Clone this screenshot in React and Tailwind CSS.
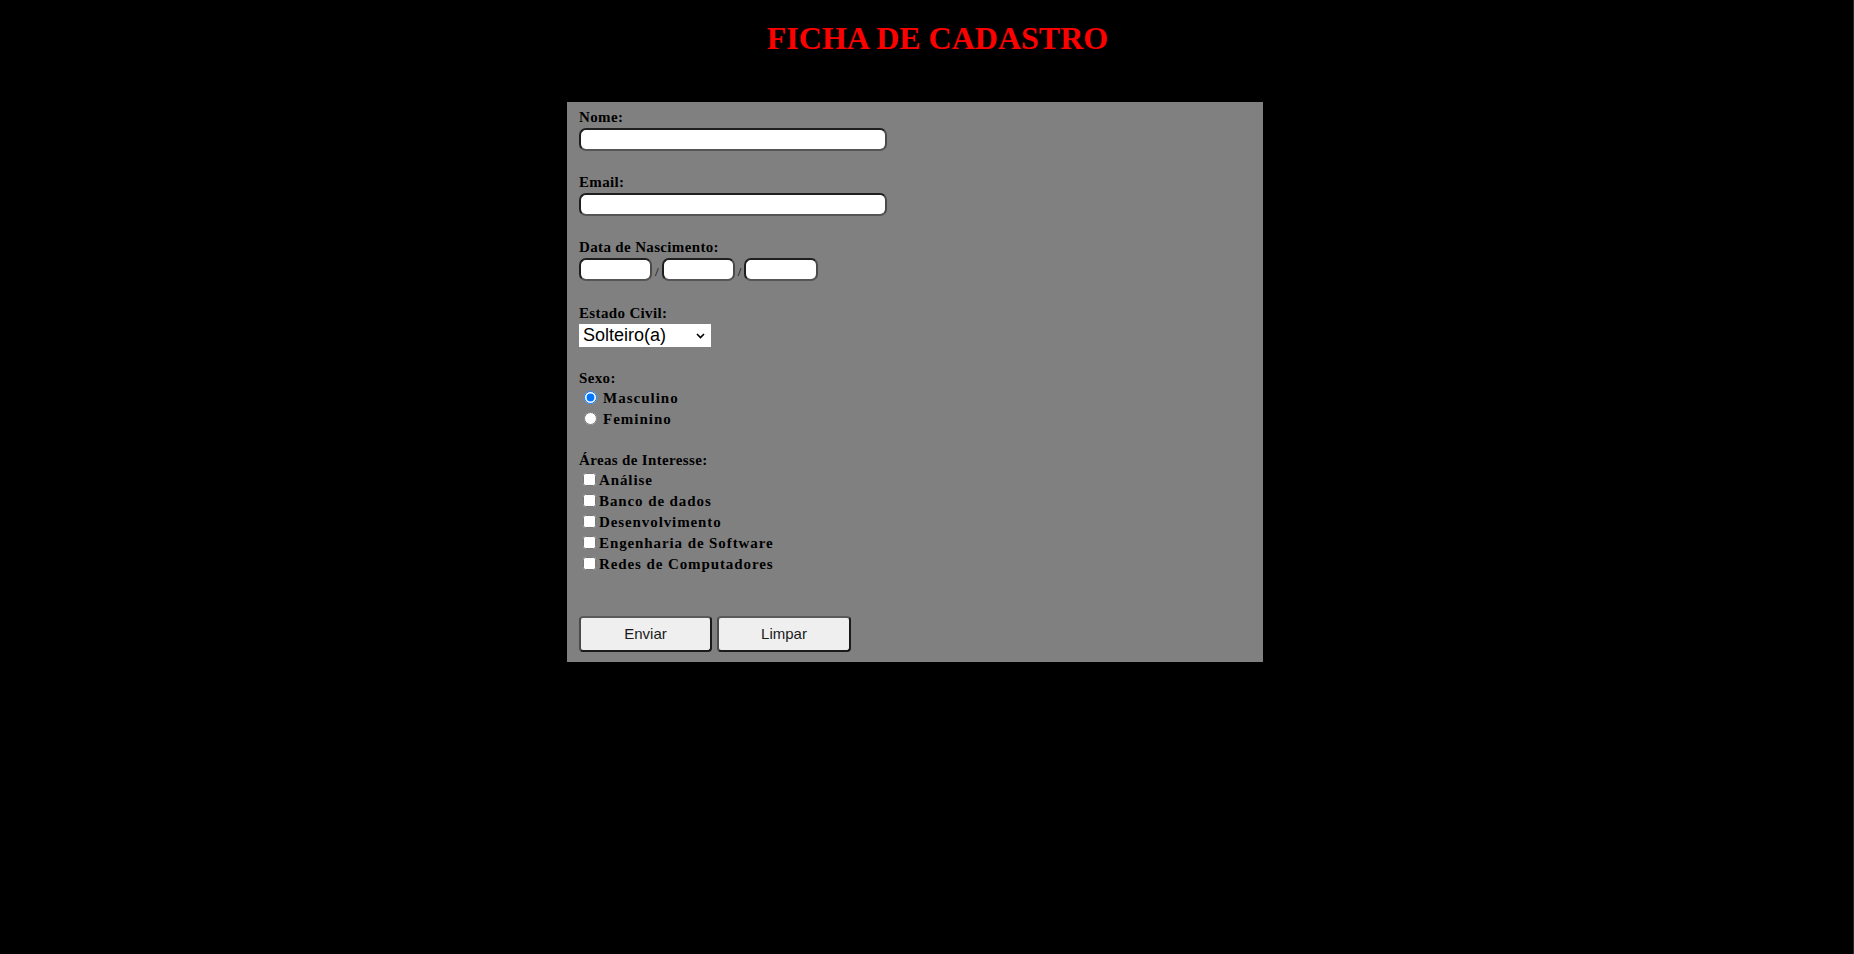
import { useState } from "react";

const serif = { fontFamily: '"Liberation Serif", "Times New Roman", serif' };
const sans = { fontFamily: '"Liberation Sans", Arial, sans-serif' };

function FieldLabel({ children, className = "" }) {
  return (
    <div className={`text-[15px] font-bold leading-[17px] tracking-[0.35px] text-black ${className}`}>
      {children}
    </div>
  );
}

function TextBox({ className = "" }) {
  return (
    <input
      type="text"
      className={`block h-[23px] rounded-[7px] border-2 border-t-[#1f1f1f] border-l-[#1f1f1f] border-r-[#4a4a4a] border-b-[#555] bg-white px-1 text-[13px] outline-none ${className}`}
    />
  );
}

const areas = [
  "Análise",
  "Banco de dados",
  "Desenvolvimento",
  "Engenharia de Software",
  "Redes de Computadores",
];

export default function App() {
  const [sexo, setSexo] = useState("M");

  return (
    <div className="flex min-h-screen w-full bg-black" style={serif}>
      <div className="flex-1">
        {/* Titulo */}
        <h1 className="pl-[22px] pt-[20px] text-center text-[32px] font-bold leading-[37px] text-[#ff0000]">
          FICHA DE CADASTRO
        </h1>

        {/* Formulario */}
        <form
          className="ml-[567px] mt-[45px] w-[696px] bg-[#808080] pb-[10px] pl-[12px] pt-[7px]"
          onSubmit={(e) => e.preventDefault()}
        >
          <FieldLabel>Nome:</FieldLabel>
          <TextBox className="mt-[2px] w-[308px]" />

          <FieldLabel className="mt-[23px]">Email:</FieldLabel>
          <TextBox className="mt-[2px] w-[308px]" />

          <FieldLabel className="mt-[23px]">Data de Nascimento:</FieldLabel>
          <div className="mt-[2px] flex items-end">
            <TextBox className="w-[73px]" />
            <span className="mx-[3px] pb-[3px] text-[13px] leading-[13px]">/</span>
            <TextBox className="w-[73px]" />
            <span className="mx-[3px] pb-[3px] text-[13px] leading-[13px]">/</span>
            <TextBox className="w-[74px]" />
          </div>

          <FieldLabel className="mt-[24px]">Estado Civil:</FieldLabel>
          <div className="relative mt-[2px] h-[23px] w-[132px] bg-white" style={sans}>
            <select
              defaultValue="solteiro"
              className="h-[23px] w-full appearance-none bg-white pl-[4px] text-[18px] leading-[23px] text-black outline-none"
            >
              <option value="solteiro">Solteiro(a)</option>
              <option value="casado">Casado(a)</option>
              <option value="divorciado">Divorciado(a)</option>
              <option value="viuvo">Viúvo(a)</option>
            </select>
            <svg
              className="pointer-events-none absolute right-[6px] top-[9px]"
              width="9"
              height="6"
              viewBox="0 0 9 6"
            >
              <path d="M1 1l3.5 3.5L8 1" fill="none" stroke="#000" strokeWidth="1.6" />
            </svg>
          </div>

          <FieldLabel className="mt-[23px]">Sexo:</FieldLabel>
          <div className="mt-[1px]">
            {[
              ["M", "Masculino"],
              ["F", "Feminino"],
            ].map(([v, t]) => (
              <label key={v} className="flex h-[21px] items-center text-[15px] font-bold tracking-[1px]">
                <input
                  type="radio"
                  name="sexo"
                  checked={sexo === v}
                  onChange={() => setSexo(v)}
                  className="ml-[5px] mr-[6px] mt-[-2px] h-[13px] w-[13px] accent-[#0075ff]"
                />
                {t}
              </label>
            ))}
          </div>

          <FieldLabel className="mt-[22px]">Áreas de Interesse:</FieldLabel>
          <div className="mt-[1px]">
            {areas.map((a) => (
              <label key={a} className="flex h-[21px] items-center text-[15px] font-bold tracking-[0.9px]">
                <input
                  type="checkbox"
                  className="ml-[4px] mr-[3px] mt-[-3px] h-[13px] w-[13px]"
                />
                {a}
              </label>
            ))}
          </div>

          <div className="mt-[41px] flex gap-[5px]" style={sans}>
            <button
              type="submit"
              className="h-[36px] w-[133px] rounded-[4px] border-2 border-t-[#5a5a5a] border-l-[#4a4a4a] border-r-[#1a1a1a] border-b-[#1a1a1a] bg-[#efefef] text-[15px] text-[#1a1a1a]"
            >
              Enviar
            </button>
            <button
              type="reset"
              className="h-[36px] w-[134px] rounded-[4px] border-2 border-t-[#5a5a5a] border-l-[#4a4a4a] border-r-[#1a1a1a] border-b-[#1a1a1a] bg-[#efefef] text-[15px] text-[#1a1a1a]"
            >
              Limpar
            </button>
          </div>
        </form>
      </div>
      <div className="w-px bg-[#2a2a2a]" />
    </div>
  );
}
